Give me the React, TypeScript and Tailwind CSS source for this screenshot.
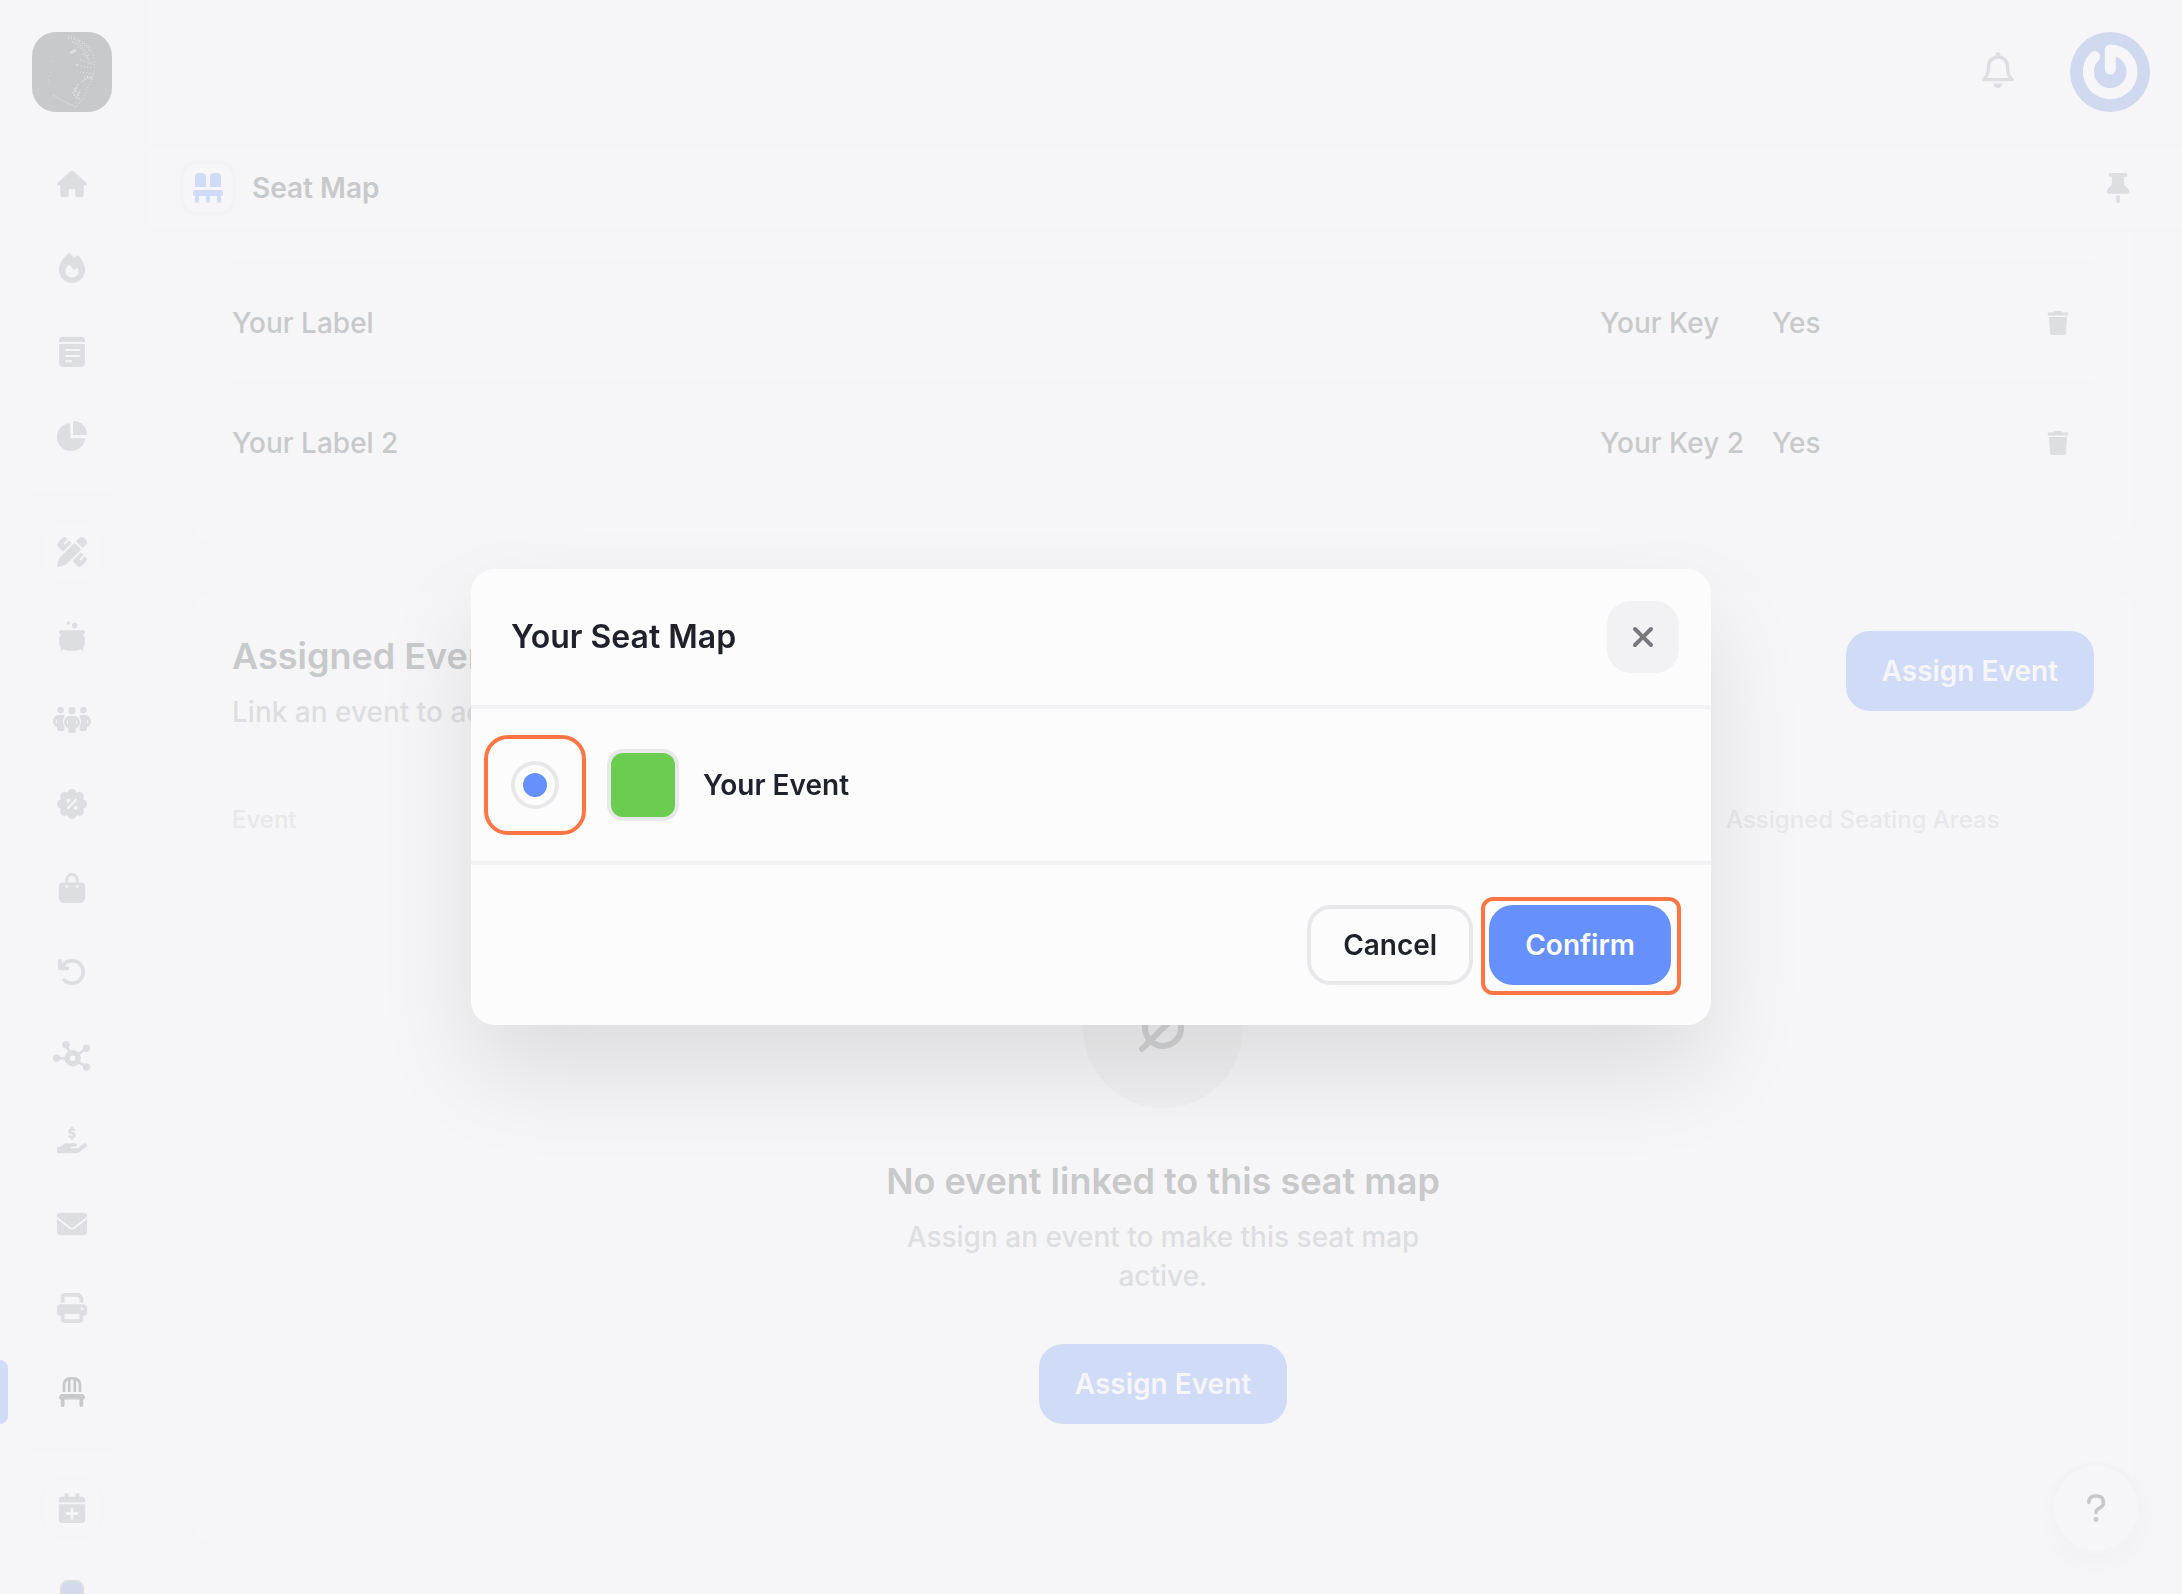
import { useState } from 'react';
import type { ReactNode } from 'react';
import {
  FaArrowRotateLeft,
  FaBagShopping,
  FaCalendarPlus,
  FaChair,
  FaEnvelope,
  FaFire,
  FaHandHoldingDollar,
  FaHouse,
  FaPenRuler,
  FaPrint,
  FaRegBell,
  FaThumbtack,
  FaTrash,
  FaXmark,
} from 'react-icons/fa6';

const iconClass = 'h-[30px] w-auto';

const NoteIcon = () => (
  <svg className={iconClass} viewBox="0 0 26 30" fill="currentColor">
    <path d="M4 0h18a4 4 0 0 1 4 4v1H0V4a4 4 0 0 1 4-4z" />
    <path d="M0 7h26v19a4 4 0 0 1-4 4H4a4 4 0 0 1-4-4z" />
    <path
      d="M7 13h13M7 19h13M7 24.300h5"
      stroke="#f6f6f8"
      strokeWidth="2"
      strokeLinecap="round"
    />
  </svg>
);

const PieIcon = () => (
  <svg className={iconClass} viewBox="0 0 30 30" fill="currentColor">
    <path d="M16 .9c0-.5.4-.9.9-.9C24.100 0 30 5.900 30 13.100c0 .5-.4.9-.9.9H16z" />
    <path d="M12.200 2.300c.6-.1 1.100.4 1.100.9v14.100h13.800c.6 0 1 .5.9 1C27.200 24.900 21.300 30 14.200 30 6.400 30 0 23.700 0 15.900 0 9 5.300 3.200 12.200 2.300z" />
  </svg>
);

const CauldronIcon = () => (
  <svg className={iconClass} viewBox="0 0 26 30" fill="currentColor">
    <circle cx="9.300" cy="2" r="1.800" />
    <circle cx="15.700" cy="4.600" r="2.800" />
    <rect y="9.300" width="26" height="3.700" rx="1.800" />
    <path d="M2.400 12.500h21.200C25.200 14.800 26 17.300 26 20c0 2.300-.6 4.200-1.800 5.800V29a1 1 0 0 1-2 0v-1.200C19.500 29.400 16.500 30 13 30s-6.500-.6-9.200-2.200V29a1 1 0 0 1-2 0v-3.200C.6 24.200 0 22.300 0 20c0-2.700.8-5.200 2.400-7.500z" />
  </svg>
);

const PeopleIcon = () => (
  <svg className="h-[26px] w-auto" viewBox="0 0 38 26" fill="currentColor">
    <circle cx="7.700" cy="3.100" r="3.300" />
    <circle cx="30.300" cy="3.100" r="3.300" />
    <circle cx="19" cy="3.500" r="3.700" />
    <path d="M6 8h4.500c1 0 1.500.7 1 1.500-2 3-2 7 0 10V22a2 2 0 0 1-2 2H6a2 2 0 0 1-2-2v-1.800C1.500 19.200 0 17 0 14.500 0 10.900 2.500 8 6 8zM4 11.800c-1.200 1.200-1.200 4.200 0 5.400z" />
    <path d="M32 8h-4.500c-1 0-1.500.7-1 1.500 2 3 2 7 0 10V22a2 2 0 0 0 2 2H32a2 2 0 0 0 2-2v-1.800c2.500-1 4-3.200 4-5.700C38 10.900 35.500 8 32 8zM34 11.800c1.200 1.200 1.200 4.200 0 5.400z" />
    <path d="M17 9h4c3.600 0 6 2.800 6 6.200 0 2.700-1.500 5-4 6V24a2 2 0 0 1-2 2h-4a2 2 0 0 1-2-2v-2.800c-2.500-1-4-3.300-4-6C11 11.800 13.400 9 17 9zM15 12.800c-1.300 1.200-1.300 3.800 0 5zM23 12.800v5c1.300-1.200 1.300-3.800 0-5z" />
  </svg>
);

const BadgeIcon = () => (
  <svg className={iconClass} viewBox="0 0 30 30" fill="currentColor">
    <circle cx="15" cy="15" r="12" />
    <circle cx="15" cy="4.500" r="4.500" />
    <circle cx="22.400" cy="7.600" r="4.500" />
    <circle cx="25.500" cy="15" r="4.500" />
    <circle cx="22.400" cy="22.400" r="4.500" />
    <circle cx="15" cy="25.500" r="4.500" />
    <circle cx="7.600" cy="22.400" r="4.500" />
    <circle cx="4.500" cy="15" r="4.500" />
    <circle cx="7.600" cy="7.600" r="4.500" />
    <path d="M11 19l8-8" stroke="#f6f6f8" strokeWidth="2.200" strokeLinecap="round" />
    <circle cx="11.200" cy="11.600" r="1.900" fill="#f6f6f8" />
    <circle cx="18.800" cy="18.800" r="1.900" fill="#f6f6f8" />
  </svg>
);

const NetworkIcon = () => (
  <svg className={iconClass} viewBox="0 0 37.500 30" fill="currentColor">
    <path
      d="M3.700 17.300h10M13 3.600l3.500 7.500M33.700 7.200l-8.500 6M33.700 26l-8.500-5"
      stroke="currentColor"
      strokeWidth="2.800"
    />
    <circle cx="3.700" cy="17.300" r="3.700" />
    <circle cx="13" cy="3.700" r="3.700" />
    <circle cx="33.600" cy="7.200" r="3.700" />
    <circle cx="33.600" cy="26" r="3.700" />
    <circle cx="19.700" cy="17.300" r="5.500" fill="none" stroke="currentColor" strokeWidth="5.400" />
  </svg>
);

const SeatsIcon = () => (
  <svg className={iconClass} viewBox="0 0 30 30" fill="currentColor">
    <path d="M2 4a4 4 0 0 1 4-4h3a4 4 0 0 1 4 4v10H2zM17 4a4 4 0 0 1 4-4h3a4 4 0 0 1 4 4v10H17z" />
    <rect y="17" width="30" height="6" rx="2" />
    <path d="M2 22h4v6a2 2 0 0 1-4 0zM13 22h4v6a2 2 0 0 1-4 0zM24 22h4v6a2 2 0 0 1-4 0z" />
  </svg>
);

const EmptySetIcon = () => (
  <svg className="size-12" viewBox="0 0 48 48" fill="none" stroke="currentColor" strokeLinecap="round">
    <circle cx="24" cy="24" r="18" strokeWidth="6" />
    <path d="M3 45L45 3" strokeWidth="6" />
  </svg>
);

const QuestionIcon = () => (
  <svg className="size-8" viewBox="0 0 32 32" fill="none" stroke="currentColor" strokeLinecap="round">
    <path
      d="M8.800 10.500V10a6 6 0 0 1 6-6h2.400a6.300 6.300 0 0 1 3.300 11.600l-3 1.900a3.200 3.200 0 0 0-1.500 2.800v.2"
      strokeWidth="3.600"
    />
    <circle cx="16" cy="27.500" r="2.500" fill="currentColor" stroke="none" />
  </svg>
);

const BrandLogo = () => (
  <svg className="size-20 rounded-3xl bg-[#c8c9cb]" viewBox="0 0 80 80" fill="none" stroke="#dddee1">
    <path d="M33 3.500c12 1 24 9 28 19 3 12 1 24-6 34-2 7-6 13-10 18" strokeWidth="1.200" strokeDasharray="1 2" />
    <path d="M36 6c9 1 17 6 22 14M40 10c8 2 13 7 17 14M46 15c5 3 9 8 11 14M50 22c4 2 8 6 10 10" strokeWidth="1.400" strokeDasharray="1 2" />
    <path d="M48 28l12 4M49 34l12 2M48 40l13 2M52 45l9-1" strokeWidth="1.400" strokeDasharray="1 2" />
    <path d="M38 21l6-3" strokeWidth="3" />
    <path d="M44 33h2" strokeWidth="2" />
    <path d="M50 50l5-4 6 0M46 52l-2 5-3 4 3 5 4 1M42 56l5 8M48 60l-4 6" strokeWidth="1.400" strokeDasharray="2 1" />
    <path d="M21 29v3M19 40l-2 4v8" strokeWidth="1" strokeDasharray="1 3" />
    <path d="M21 63l10 6 7 3 7 4" strokeWidth="1" strokeDasharray="2 1" />
  </svg>
);

const AvatarImage = () => (
  <svg className="size-20 rounded-full bg-[#d0d9f0]" viewBox="0 0 80 80" fill="none">
    <path
      d="M24.600 24.600A21.800 21.800 0 1 0 40.300 18v19"
      stroke="#f6f6f8"
      strokeWidth="11"
      strokeLinecap="round"
      strokeLinejoin="round"
    />
  </svg>
);

type NavItemProps = {
  label: string;
  icon: ReactNode;
  active?: boolean;
  framed?: boolean;
};

const NavItem = ({ label, icon, active, framed }: NavItemProps) => (
  <a
    href="#"
    aria-label={label}
    className={`relative flex h-[84px] w-full shrink-0 items-center justify-center ${
      active ? 'text-[#c8c9cb]' : 'text-[#dddee1]'
    }`}
  >
    {active && <span className="absolute left-0 h-16 w-2 rounded-r-lg bg-[#d0dbf7]" />}
    <span
      className={`flex size-16 items-center justify-center rounded-3xl ${
        framed ? 'border-4 border-[#f5f5f7]' : ''
      }`}
    >
      {icon}
    </span>
  </a>
);

const NavDivider = () => <div className="my-[14px] h-1 w-20 shrink-0 bg-[#f5f5f7]" />;

const Sidebar = () => (
  <aside className="flex w-[148px] shrink-0 flex-col overflow-hidden border-r-4 border-[#f5f5f7]">
    <a href="#" aria-label="Dashboard" className="mx-8 mt-8 mb-[30px] block shrink-0">
      <BrandLogo />
    </a>
    <nav className="flex flex-col items-center">
      <NavItem label="Home" icon={<FaHouse className={iconClass} />} />
      <NavItem label="Trending" icon={<FaFire className={iconClass} />} />
      <NavItem label="Orders" icon={<NoteIcon />} />
      <NavItem label="Reports" icon={<PieIcon />} />
      <NavDivider />
      <NavItem label="Design" icon={<FaPenRuler className={iconClass} />} framed />
      <NavItem label="Workshop" icon={<CauldronIcon />} />
      <NavItem label="Customers" icon={<PeopleIcon />} />
      <NavItem label="Discounts" icon={<BadgeIcon />} />
      <NavItem label="Shop" icon={<FaBagShopping className={iconClass} />} />
      <NavItem label="Refunds" icon={<FaArrowRotateLeft className={iconClass} />} />
      <NavItem label="Integrations" icon={<NetworkIcon />} />
      <NavItem label="Payouts" icon={<FaHandHoldingDollar className={iconClass} />} />
      <NavItem label="Messages" icon={<FaEnvelope className={iconClass} />} />
      <NavItem label="Printing" icon={<FaPrint className={iconClass} />} />
      <NavItem label="Seat maps" icon={<FaChair className={iconClass} />} active />
      <NavDivider />
      <NavItem label="New event" icon={<FaCalendarPlus className={iconClass} />} framed />
      <NavItem
        label="Apps"
        icon={<span className="size-6 rounded-lg border-2 border-[#dddee1] bg-[#d3daee]" />}
      />
    </nav>
  </aside>
);

const seatingAreas = [
  { label: 'Your Label', key: 'Your Key', active: 'Yes' },
  { label: 'Your Label 2', key: 'Your Key 2', active: 'Yes' },
];

const cellClass = 'h-[120px] border-t-4 border-[#f5f5f7]';

const SeatingAreas = () => (
  <section className="rounded-b-3xl bg-[#f6f6f8] px-10 pt-[29px] pb-[42px]">
    <table className="w-full table-fixed border-separate border-spacing-0 text-left text-[28px] font-medium text-[#c8c9cb]">
      <colgroup>
        <col />
        <col className="w-[172px]" />
        <col className="w-[250px]" />
        <col className="w-[72px]" />
      </colgroup>
      <tbody>
        {seatingAreas.map((area) => (
          <tr key={area.key}>
            <td className={cellClass}>{area.label}</td>
            <td className={cellClass}>{area.key}</td>
            <td className={cellClass}>{area.active}</td>
            <td className={cellClass}>
              <button
                type="button"
                aria-label={`Delete ${area.label}`}
                className="flex size-[72px] items-center justify-center text-[#dddee1]"
              >
                <FaTrash className="h-6 w-auto" />
              </button>
            </td>
          </tr>
        ))}
      </tbody>
    </table>
  </section>
);

const AssignButton = () => (
  <button
    type="button"
    className="h-20 rounded-3xl bg-[#d0dbf7] px-9 text-[28px] font-semibold text-[#f6f6f8]"
  >
    Assign Event
  </button>
);

const AssignedEvents = () => (
  <section className="mt-12 rounded-3xl bg-[#f6f6f8] px-10 pt-10 pb-[120px]">
    <div className="flex items-start justify-between">
      <div>
        <h2 className="text-4xl leading-[50px] font-semibold text-[#c8c9cb]">Assigned Events</h2>
        <p className="mt-3 text-[28px] leading-[39px] font-medium text-[#dddee1]">
          Link an event to activate this seat map.
        </p>
      </div>
      <AssignButton />
    </div>
    <table className="mt-18 w-full table-fixed text-left text-2xl text-[#e8e8ea]">
      <thead>
        <tr>
          <th className="font-medium">Event</th>
          <th className="w-[368px] font-medium">Assigned Seating Areas</th>
        </tr>
      </thead>
    </table>
    <div className="mt-28 flex flex-col items-center text-center">
      <div className="flex size-40 items-center justify-center rounded-full bg-[#f1f1f3] text-[#d3d4d6]">
        <EmptySetIcon />
      </div>
      <h3 className="mt-12 text-4xl leading-[50px] font-semibold text-[#c8c9cb]">
        No event linked to this seat map
      </h3>
      <p className="mt-3 mb-12 max-w-[560px] text-[28px] leading-[39px] font-medium text-[#dddee1]">
        Assign an event to make this seat map active.
      </p>
      <AssignButton />
    </div>
  </section>
);

type SeatMapDialogProps = {
  onClose: () => void;
};

const SeatMapDialog = ({ onClose }: SeatMapDialogProps) => (
  <div className="fixed inset-0 flex items-center justify-center">
    <div
      role="dialog"
      aria-labelledby="dialog-title"
      className="w-full max-w-[1240px] rounded-3xl bg-[#fcfcfc] text-[#1f222a] shadow-[0_48px_96px_rgba(0,0,0,0.1)]"
    >
      <div className="flex items-center justify-between border-b-4 border-[#f2f2f4] py-8 pr-8 pl-10">
        <h1 id="dialog-title" className="text-[32px] font-semibold">
          Your Seat Map
        </h1>
        <button
          type="button"
          aria-label="Close"
          onClick={onClose}
          className="flex size-[72px] items-center justify-center rounded-3xl bg-[#f2f2f4] text-[#77797e]"
        >
          <FaXmark className="size-8" />
        </button>
      </div>
      <div className="flex items-center gap-12 border-b-4 border-[#f2f2f4] p-10">
        <span className="relative flex">
          <input
            id="your-event"
            type="radio"
            name="event"
            defaultChecked
            className="grid size-12 appearance-none place-content-center rounded-full border-4 border-[#e8e8ea] before:size-6 before:rounded-full before:content-[''] checked:before:bg-[#6690fb]"
          />
          <span className="pointer-events-none absolute -inset-x-[27px] -inset-y-[26px] rounded-3xl border-4 border-[#ff7644]" />
        </span>
        <label htmlFor="your-event" className="flex items-center gap-6 text-[28px] font-semibold">
          <span className="size-[72px] rounded-2xl border-4 border-[#e8e8ea] bg-[#6acd50]" />
          Your Event
        </label>
      </div>
      <div className="flex justify-end gap-4 p-10 text-[28px] font-semibold">
        <button
          type="button"
          onClick={onClose}
          className="h-20 rounded-3xl border-4 border-[#e8e8ea] px-8"
        >
          Cancel
        </button>
        <span className="relative">
          <button
            type="button"
            onClick={onClose}
            className="h-20 rounded-3xl bg-[#6690fb] px-9 text-[#fcfcfc]"
          >
            Confirm
          </button>
          <span className="pointer-events-none absolute -top-2 -right-[10px] -bottom-[10px] -left-2 rounded-xl border-4 border-[#ff7644]" />
        </span>
      </div>
    </div>
  </div>
);

const App = () => {
  const [open, setOpen] = useState(true);

  return (
    <div className="flex h-screen overflow-hidden bg-[#f6f6f8] font-[Inter,sans-serif]">
      <Sidebar />
      <div className="flex min-w-0 flex-1 flex-col">
        <header className="flex shrink-0 items-center justify-end gap-8 border-b-4 border-[#f5f5f7] px-8 py-8">
          <button
            type="button"
            aria-label="Notifications"
            className="flex size-20 items-center justify-center pb-1 text-[#dddee1]"
          >
            <FaRegBell className="h-9 w-auto" />
          </button>
          <button type="button" aria-label="Account">
            <AvatarImage />
          </button>
        </header>
        <div className="flex shrink-0 items-center gap-4 border-b-4 border-[#f5f5f7] px-8 py-3">
          <span className="flex size-14 items-center justify-center rounded-2xl border-4 border-[#f3f3f5] text-[#d0dbf7]">
            <SeatsIcon />
          </span>
          <span className="flex-1 text-[28px] font-semibold text-[#c8c9cb]">Seat Map</span>
          <button
            type="button"
            aria-label="Pin page"
            className="flex h-14 w-16 items-center justify-center text-[#dddee1]"
          >
            <FaThumbtack className={iconClass} />
          </button>
        </div>
        <main className="min-h-0 flex-1 overflow-hidden bg-[#f5f5f7] pr-12 pl-11">
          <SeatingAreas />
          <AssignedEvents />
        </main>
      </div>
      <button
        type="button"
        aria-label="Help"
        className="fixed right-10 bottom-10 flex size-[92px] items-center justify-center rounded-full border-4 border-[#f3f3f5] bg-[#f6f6f8] text-[#c8c9cb] shadow-[0_8px_24px_rgba(0,0,0,0.02)]"
      >
        <QuestionIcon />
      </button>
      {open && <SeatMapDialog onClose={() => setOpen(false)} />}
    </div>
  );
};

export default App;
